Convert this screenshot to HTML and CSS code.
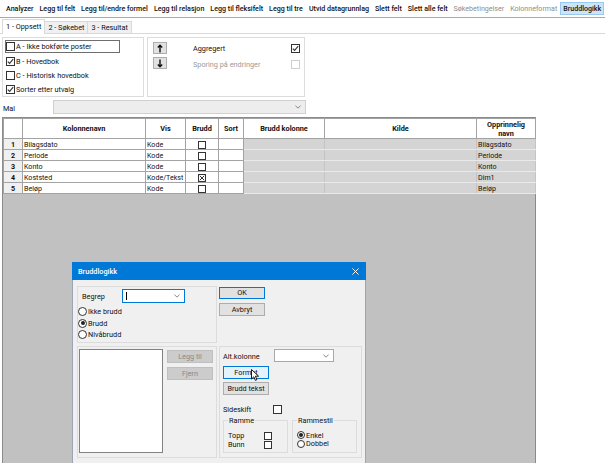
FILE: index.html
```html
<!DOCTYPE html>
<html>
<head>
<meta charset="utf-8">
<title>Bruddlogikk</title>
<link rel="stylesheet" href="styles.css">
</head>
<body>
<div class="toolbar">
  <span class="tb">Analyzer</span>
  <span class="tb">Legg til felt</span>
  <span class="tb">Legg til/endre formel</span>
  <span class="tb">Legg til relasjon</span>
  <span class="tb">Legg til fleksifelt</span>
  <span class="tb">Legg til tre</span>
  <span class="tb">Utvid datagrunnlag</span>
  <span class="tb">Slett felt</span>
  <span class="tb">Slett alle felt</span>
  <span class="tb dis">Søkebetingelser</span>
  <span class="tb dis">Kolonneformat</span>
  <span class="tb act">Bruddlogikk</span>
</div>
<div class="tabs">
  <span class="tab act">1 - Oppsett</span>
  <span class="tab">2 - Søkebet</span>
  <span class="tab">3 - Resultat</span>
</div>
<div class="page">
  <div class="top">
    <div class="panel plist">
      <div class="item focus"><span class="cb"></span><span>A - Ikke bokførte poster</span></div>
      <div class="item"><span class="cb"><svg viewBox="0 0 7 7" class="tick"><polyline points="0.8,3.6 2.6,5.4 6.2,1.2"/></svg></span><span>B - Hovedbok</span></div>
      <div class="item"><span class="cb"></span><span>C - Historisk hovedbok</span></div>
      <div class="item"><span class="cb"><svg viewBox="0 0 7 7" class="tick"><polyline points="0.8,3.6 2.6,5.4 6.2,1.2"/></svg></span><span>Sorter etter utvalg</span></div>
    </div>
    <div class="panel popts">
      <div class="arrows">
        <span class="abtn"><svg viewBox="0 0 6 9" class="arr"><path d="M3 8.5V1.2M0.8 3.4L3 1.2L5.2 3.4"/></svg></span>
        <span class="abtn"><svg viewBox="0 0 6 9" class="arr"><path d="M3 0.5V7.8M0.8 5.6L3 7.8L5.2 5.6"/></svg></span>
      </div>
      <div class="opts">
        <div class="opt"><span>Aggregert</span><span class="cb"><svg viewBox="0 0 7 7" class="tick"><polyline points="0.8,3.6 2.6,5.4 6.2,1.2"/></svg></span></div>
        <div class="opt dis"><span>Sporing på endringer</span><span class="cb dis"></span></div>
      </div>
    </div>
  </div>
  <div class="malrow">
    <span class="mallbl">Mal</span>
    <div class="combo cdis"><svg viewBox="0 0 7 4" class="chev"><polyline points="0.5,0.5 3.5,3.3 6.5,0.5"/></svg></div>
  </div>
  <div class="grid">
    <table>
      <colgroup>
        <col style="width:19px"><col style="width:123px"><col style="width:40px"><col style="width:33px"><col style="width:25px"><col style="width:81px"><col style="width:152px"><col style="width:59px">
      </colgroup>
      <thead>
        <tr><th></th><th>Kolonnenavn</th><th>Vis</th><th>Brudd</th><th>Sort</th><th>Brudd kolonne</th><th>Kilde</th><th>Opprinnelig<br>navn</th></tr>
      </thead>
      <tbody>
        <tr><td class="num">1</td><td>Bilagsdato</td><td>Kode</td><td class="c"><span class="gcb"></span></td><td></td><td class="g"></td><td class="g"></td><td class="g">Bilagsdato</td></tr>
        <tr><td class="num">2</td><td>Periode</td><td>Kode</td><td class="c"><span class="gcb"></span></td><td></td><td class="g"></td><td class="g"></td><td class="g">Periode</td></tr>
        <tr><td class="num">3</td><td>Konto</td><td>Kode</td><td class="c"><span class="gcb"></span></td><td></td><td class="g"></td><td class="g"></td><td class="g">Konto</td></tr>
        <tr><td class="num">4</td><td>Koststed</td><td>Kode/Tekst</td><td class="c"><span class="gcb"><svg viewBox="0 0 6 6" class="xm"><path d="M0.8 0.8L5.2 5.2M5.2 0.8L0.8 5.2"/></svg></span></td><td></td><td class="g"></td><td class="g"></td><td class="g">Dim1</td></tr>
        <tr><td class="num">5</td><td>Beløp</td><td>Kode</td><td class="c"><span class="gcb"></span></td><td></td><td class="g"></td><td class="g"></td><td class="g">Beløp</td></tr>
      </tbody>
    </table>
  </div>
</div>

<div class="dialog">
  <div class="dtitle">
    <span>Bruddlogikk</span>
    <svg viewBox="0 0 8 8" class="close"><path d="M0.5 0.5L7.5 7.5M7.5 0.5L0.5 7.5"/></svg>
  </div>
  <div class="dbody">
    <div class="grp gtop">
      <div class="brow">
        <span class="blbl">Begrep</span>
        <div class="combo cfocus"><span class="caret"></span><svg viewBox="0 0 7 4" class="chev"><polyline points="0.5,0.5 3.5,3.3 6.5,0.5"/></svg></div>
      </div>
      <div class="radio"><span class="rb"></span><span>Ikke brudd</span></div>
      <div class="radio"><span class="rb on"></span><span>Brudd</span></div>
      <div class="radio"><span class="rb"></span><span>Nivåbrudd</span></div>
    </div>
    <div class="btncol">
      <span class="btn def">OK</span>
      <span class="btn">Avbryt</span>
    </div>
    <div class="grp glist">
      <div class="listbox"></div>
      <div class="lbtns">
        <span class="btn bdis">Legg til</span>
        <span class="btn bdis">Fjern</span>
      </div>
    </div>
    <div class="grp gopts">
      <div class="arow">
        <span class="albl">Alt.kolonne</span>
        <div class="combo cwhite"><svg viewBox="0 0 7 4" class="chev"><polyline points="0.5,0.5 3.5,3.3 6.5,0.5"/></svg></div>
      </div>
      <span class="btn hov fbtn">Format<svg viewBox="0 0 8 12" class="cursor"><path d="M0.5 0.5V10L2.8 7.8L4.4 11.4L5.9 10.7L4.4 7.2H7.6Z"/></svg></span>
      <span class="btn tbtn">Brudd tekst</span>
      <div class="srow"><span class="slbl">Sideskift</span><span class="cb"></span></div>
      <div class="subs">
        <fieldset class="sub">
          <legend>Ramme</legend>
          <div class="srow2"><span class="s2lbl">Topp</span><span class="cb sm"></span></div>
          <div class="srow2"><span class="s2lbl">Bunn</span><span class="cb sm"></span></div>
        </fieldset>
        <fieldset class="sub">
          <legend>Rammestil</legend>
          <div class="radio r2"><span class="rb sm on"></span><span>Enkel</span></div>
          <div class="radio r2"><span class="rb sm"></span><span>Dobbel</span></div>
        </fieldset>
      </div>
    </div>
  </div>
</div>
</body>
</html>
```

FILE: styles.css
```css
* { box-sizing: border-box; }
html, body { margin: 0; padding: 0; }
body {
  width: 605px;
  height: 463px;
  overflow: hidden;
  position: relative;
  background: #ffffff;
  font-family: Roboto, "Noto Sans", "DejaVu Sans", sans-serif;
  font-size: 7.3px;
  color: #111;
}

/* toolbar */
.toolbar {
  display: flex;
  align-items: center;
  gap: 0;
  height: 18px;
  padding-left: 3px;
  border-bottom: 1px solid #a9a9a9;
  white-space: nowrap;
  overflow: hidden;
  font-size: 7.1px;
}
.tb {
  height: 13px;
  line-height: 11px;
  padding: 0 2px;
  border: 1px solid transparent;
  font-weight: 500;
  flex: none;
}
.tb.dis { color: #8d8d8d; font-weight: 400; }
.tb.act { background: #cce4f7; border-color: #99c9ef; }

/* tabs */
.tabs {
  display: flex;
  align-items: flex-end;
  height: 16px;
  padding-left: 2px;
  border-bottom: 1px solid #d9d9d9;
}
.tab {
  height: 12px;
  line-height: 11px;
  padding: 0 3px;
  background: #f0f0f0;
  border: 1px solid #d9d9d9;
  border-bottom: none;
  margin-left: -1px;
}
.tab.act {
  height: 15px;
  line-height: 14px;
  background: #fff;
  margin-left: 0;
  position: relative;
  z-index: 1;
  margin-bottom: -1px;
}

/* page */
.page { padding: 3px 0 0 2px; }
.top { display: flex; gap: 3px; }
.panel {
  height: 60px;
  border: 1px solid #dcdcdc;
  background: #fff;
}
.plist { width: 142px; padding: 2px 0 0 2px; }
.item {
  display: flex;
  align-items: center;
  gap: 1px;
  height: 14px;
  border: 1px solid transparent;
}
.item.focus { width: 115px; height: 13px; margin-bottom: 1px; border-color: #6e6e6e; }

.cb {
  width: 9px;
  height: 9px;
  border: 1px solid #333;
  background: #fff;
  display: inline-flex;
  align-items: center;
  justify-content: center;
  flex: none;
}
.cb.sm { width: 8px; height: 8px; }
.cb.dis { border-color: #cfcfcf; }
.tick { width: 7px; height: 7px; fill: none; stroke: #333; stroke-width: 1.1; }

.popts { width: 158px; display: flex; padding: 4px 0 0 5px; }
.arrows { display: flex; flex-direction: column; gap: 3px; }
.abtn {
  width: 14px;
  height: 12px;
  background: #e1e1e1;
  border: 1px solid #adadad;
  display: flex;
  align-items: center;
  justify-content: center;
}
.arr { width: 6px; height: 9px; fill: none; stroke: #111; stroke-width: 1.4; }
.opts { margin-left: 26px; width: 107px; margin-top: -2px; }
.opt {
  display: flex;
  align-items: center;
  justify-content: space-between;
  height: 16px;
}
.opt.dis { color: #9a9a9a; }

/* Mal row */
.malrow { display: flex; align-items: center; height: 14px; margin-top: 3px; }
.mallbl { width: 51px; padding-left: 1px; padding-top: 2px; }
.combo {
  position: relative;
  height: 14px;
  border: 1px solid #b8b8b8;
  display: flex;
  align-items: center;
  justify-content: flex-end;
  padding-right: 4px;
}
.cdis { width: 253px; background: #ededed; border-color: #d0d0d0; }
.chev { width: 6px; height: 4px; fill: none; stroke: #777; stroke-width: 1; }

/* grid */
.grid {
  margin-top: 3px;
  width: 534px;
  height: 360px;
  background: #c1c1c1;
  border: 1px solid #8b8b8b;
}
table {
  table-layout: fixed;
  border-collapse: collapse;
  width: 532px;
}
th, td {
  border: 1px solid #a3a3a3;
  padding: 0 0 0 1px;
  white-space: nowrap;
  overflow: hidden;
  text-align: left;
  font-weight: 400;
}
th {
  height: 20px;
  background: #fff;
  font-weight: 700;
  text-align: center;
  line-height: 9px;
  padding: 0;
}
td { height: 11px; line-height: 9px; background: #fff; font-size: 7.1px; }
td.num { background: #f0f0f0; font-weight: 700; text-align: center; padding: 0; }
td.c { text-align: center; padding: 0; }
td.g { background: #d4d4d4; border-color: #e9e9e9 #c4c4c4; }
.gcb {
  display: inline-flex;
  align-items: center;
  justify-content: center;
  width: 8px;
  height: 8px;
  border: 1px solid #333;
  background: #fff;
  vertical-align: middle;
}
.xm { width: 6px; height: 6px; fill: none; stroke: #333; stroke-width: 1; }

/* dialog */
.dialog {
  position: absolute;
  left: 72px;
  top: 262px;
  width: 294px;
  height: 210px;
  background: #f0f0f0;
  border: 1px solid #9aa6b4;
  border-top: none;
}
.dtitle {
  height: 18px;
  margin: 0 -1px;
  background: #0078d7;
  color: #fff;
  display: flex;
  align-items: center;
  justify-content: space-between;
  padding: 0 7px 0 6px;
  font-weight: 500;
}
.close { width: 7px; height: 7px; fill: none; stroke: #fff; stroke-width: 1.1; }
.dbody {
  display: grid;
  grid-template-columns: 140px 143px;
  grid-template-rows: 57px 112px;
  column-gap: 2px;
  row-gap: 3px;
  padding: 6px 0 0 4px;
}
.grp { border: 1px solid #dcdcdc; }
.gtop { padding-top: 2px; }
.brow { display: flex; align-items: center; height: 14px; padding-left: 4px; margin-bottom: 3px; }
.blbl { width: 40px; }
.cfocus { width: 63px; background: #fff; border-color: #0078d7; justify-content: space-between; padding-left: 3px; }
.caret { width: 1px; height: 8px; background: #000; }
.radio { display: flex; align-items: center; gap: 1px; height: 11.5px; }
.rb {
  width: 9px;
  height: 9px;
  border: 1px solid #333;
  border-radius: 50%;
  background: #fff;
  display: inline-flex;
  align-items: center;
  justify-content: center;
  flex: none;
}
.rb.sm { width: 8px; height: 8px; }
.rb.on::after { content: ""; width: 4px; height: 4px; border-radius: 50%; background: #222; }

.btncol { display: flex; flex-direction: column; gap: 4px; padding-top: 1px; }
.btn {
  width: 46px;
  height: 13px;
  line-height: 11px;
  text-align: center;
  background: #e1e1e1;
  border: 1px solid #adadad;
  display: block;
  position: relative;
}
.btn.def { border-color: #0078d7; height: 12px; line-height: 10px; }
.btn.bdis { background: #cccccc; border-color: #bfbfbf; color: #8a8a8a; }
.btn.hov { background: #e5f1fb; border-color: #0078d7; }

.glist { display: flex; padding: 2px 0 0 1px; gap: 4px; }
.listbox { width: 84px; height: 104px; background: #fff; border: 1px solid #828282; }
.lbtns { display: flex; flex-direction: column; gap: 4px; padding-top: 1px; }

.gopts { padding: 2px 0 0 3px; }
.arow { display: flex; align-items: center; height: 13px; }
.albl { width: 51px; padding-top: 2px; }
.cwhite { width: 60px; height: 13px; background: #fff; border-color: #a8a8a8; }
.fbtn { margin-top: 4px; }
.tbtn { margin-top: 3px; }
.cursor {
  position: absolute;
  left: 27px;
  top: 2px;
  width: 8px;
  height: 12px;
  fill: #fff;
  stroke: #000;
  stroke-width: 0.9;
}
.srow { display: flex; align-items: center; height: 10px; margin-top: 9px; }
.slbl { width: 50px; }
.subs { display: flex; gap: 4px; margin-top: 2px; }
.sub {
  margin: 0;
  width: 65px;
  height: 37px;
  border: 1px solid #dcdcdc;
  padding: 6px 0 0 4px;
  min-inline-size: 0;
}
.sub legend {
  padding: 0 1px;
  margin-left: 0;
  line-height: 9px;
  font-size: 7.3px;
}
.srow2 { display: flex; align-items: center; height: 9px; }
.s2lbl { width: 36px; }
.r2 { height: 8.5px; }
```
